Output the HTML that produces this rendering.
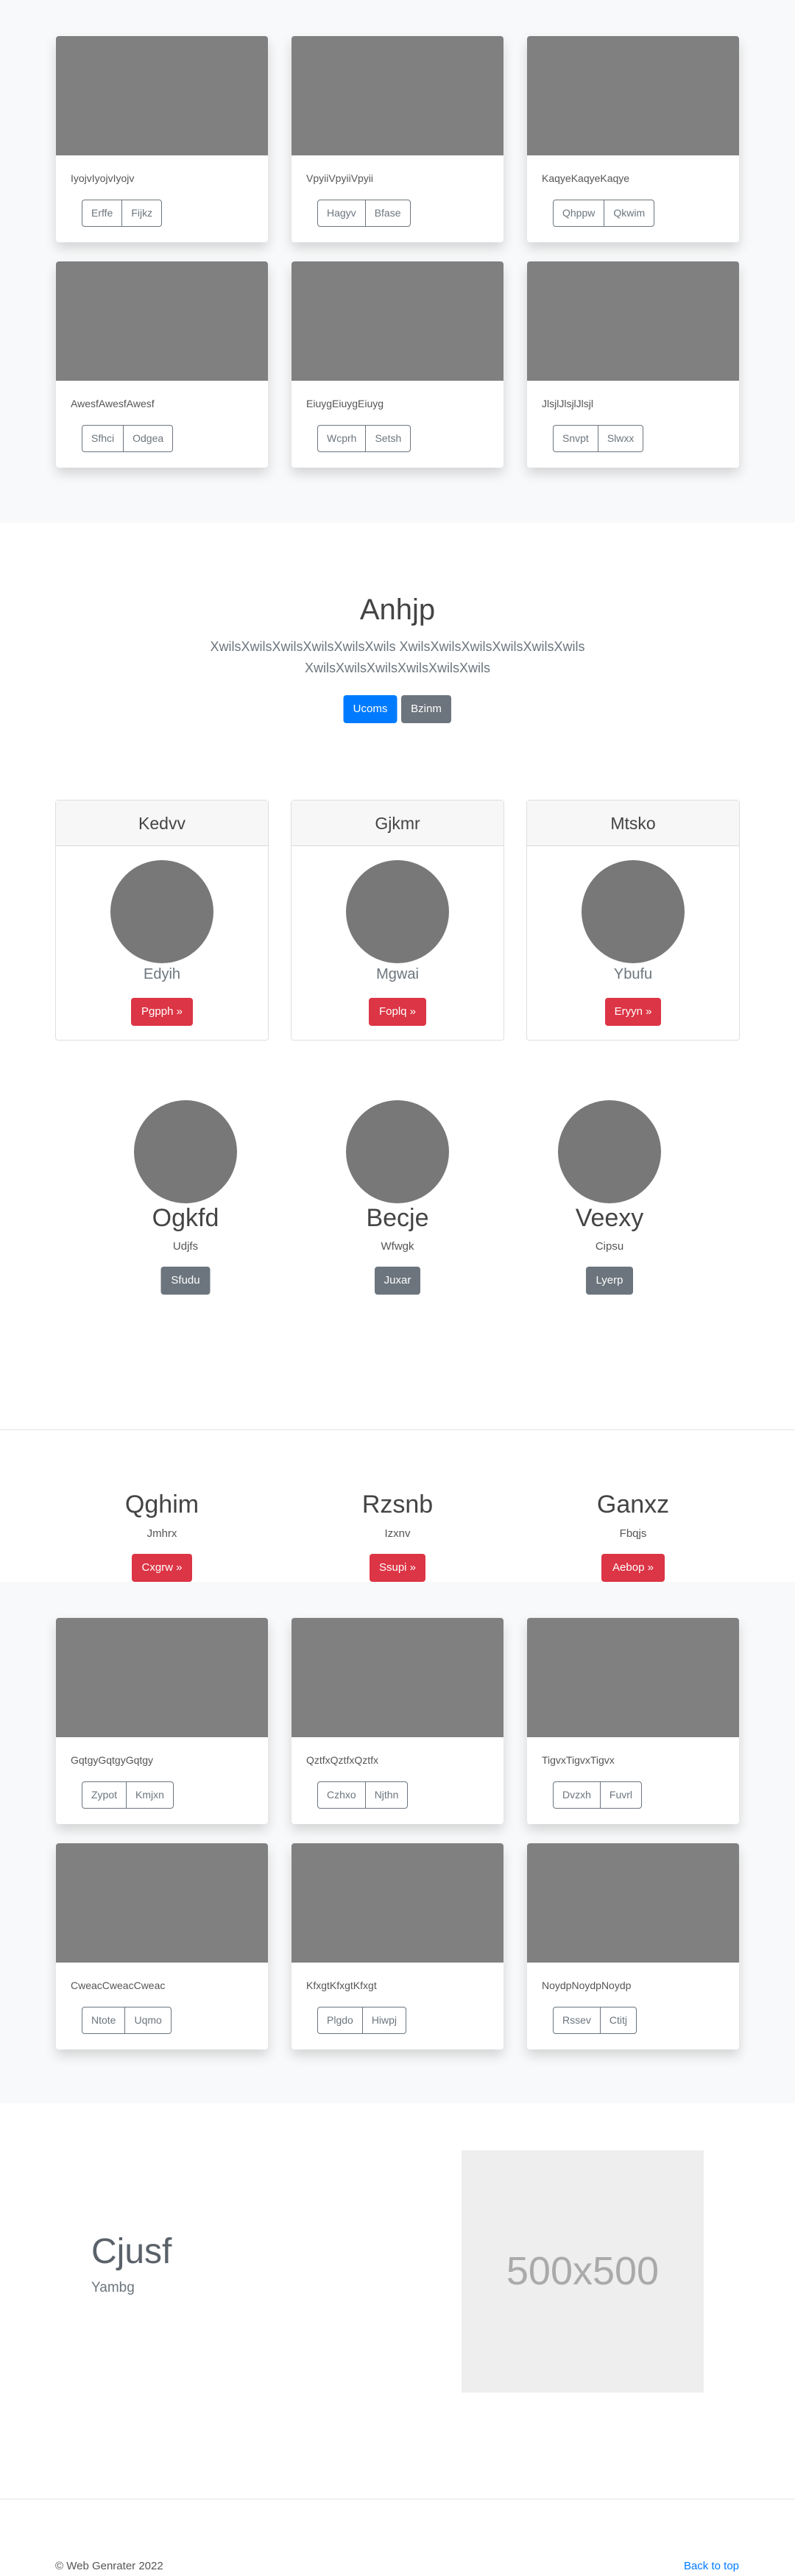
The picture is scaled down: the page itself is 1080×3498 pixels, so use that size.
<!DOCTYPE html>
<html><head><meta charset="utf-8"><style>
*{box-sizing:border-box;margin:0;padding:0}
body{width:1080px;height:3498px;position:relative;background:#fff;font-family:"Liberation Sans",sans-serif;color:#212529;overflow:hidden}
.abs{position:absolute}
.gray{background:#f8f9fa;left:0;width:1080px}
.card{position:absolute;width:288px;height:280px;background:#fff;border-radius:4px;box-shadow:0 .5rem 1rem rgba(0,0,0,.15);overflow:hidden}
.card .img{height:162px;background:#808080}
.card .t{position:absolute;left:20px;top:185px;font-size:14px;color:#555}
.card .bg{position:absolute;left:35px;top:222px;display:flex;height:37px;border:1px solid #6c757d;border-radius:4px}
.card .bg span{padding:0 12px;line-height:35px;font-size:14px;color:#6c757d}
.card .bg span+span{border-left:1px solid #6c757d}
.btn{position:absolute;height:38px;line-height:38px;color:#fff;font-size:15px;border-radius:4px;text-align:center;padding:0 12px;transform:translateX(-50%)}
.red{background:#dc3545}.sec{background:#6c757d}.blue{background:#007bff}
.c{position:absolute;transform:translateX(-50%);text-align:center;white-space:nowrap}
.pc{position:absolute;width:290px;height:327px;border:1px solid rgba(0,0,0,.125);border-radius:4px;top:1086px}
.pc .h{height:62px;background:#f7f7f7;border-bottom:1px solid rgba(0,0,0,.125);text-align:center;line-height:62px;font-size:23px;color:#444}
.circ{position:absolute;width:140px;height:140px;border-radius:50%;background:#787878;transform:translateX(-50%)}
</style></head><body>

<div class="abs gray" style="top:0;height:710px"></div>
<div class="card" style="left:76px;top:49px"><div class="img"></div><div class="t">IyojvIyojvIyojv</div><div class="bg"><span>Erffe</span><span>Fijkz</span></div></div>
<div class="card" style="left:396px;top:49px"><div class="img"></div><div class="t">VpyiiVpyiiVpyii</div><div class="bg"><span>Hagyv</span><span>Bfase</span></div></div>
<div class="card" style="left:716px;top:49px"><div class="img"></div><div class="t">KaqyeKaqyeKaqye</div><div class="bg"><span>Qhppw</span><span>Qkwim</span></div></div>
<div class="card" style="left:76px;top:355px"><div class="img"></div><div class="t">AwesfAwesfAwesf</div><div class="bg"><span>Sfhci</span><span>Odgea</span></div></div>
<div class="card" style="left:396px;top:355px"><div class="img"></div><div class="t">EiuygEiuygEiuyg</div><div class="bg"><span>Wcprh</span><span>Setsh</span></div></div>
<div class="card" style="left:716px;top:355px"><div class="img"></div><div class="t">JlsjlJlsjlJlsjl</div><div class="bg"><span>Snvpt</span><span>Slwxx</span></div></div>

<div class="c" style="left:540px;top:806px;font-size:40px;font-weight:300;color:#444">Anhjp</div>
<div class="c" style="left:540px;top:864px;font-size:18px;line-height:29px;color:#6c757d">XwilsXwilsXwilsXwilsXwilsXwils XwilsXwilsXwilsXwilsXwilsXwils<br>XwilsXwilsXwilsXwilsXwilsXwils</div>
<div class="btn blue" style="left:503px;top:944px;width:73px">Ucoms</div>
<div class="btn sec" style="left:579px;top:944px;width:68px">Bzinm</div>

<div class="pc" style="left:75px"><div class="h">Kedvv</div></div>
<div class="pc" style="left:395px"><div class="h">Gjkmr</div></div>
<div class="pc" style="left:715px"><div class="h">Mtsko</div></div>
<div class="circ" style="left:220px;top:1168px"></div>
<div class="circ" style="left:540px;top:1168px"></div>
<div class="circ" style="left:860px;top:1168px"></div>
<div class="c" style="left:220px;top:1312px;font-size:20px;color:#6c757d">Edyih</div>
<div class="c" style="left:540px;top:1312px;font-size:20px;color:#6c757d">Mgwai</div>
<div class="c" style="left:860px;top:1312px;font-size:20px;color:#6c757d">Ybufu</div>
<div class="btn red" style="left:220px;top:1355px;width:84px">Pgpph »</div>
<div class="btn red" style="left:540px;top:1355px;width:78px">Foplq »</div>
<div class="btn red" style="left:860px;top:1355px;width:76px">Eryyn »</div>

<div class="circ" style="left:252px;top:1494px"></div>
<div class="circ" style="left:540px;top:1494px"></div>
<div class="circ" style="left:828px;top:1494px"></div>
<div class="c" style="left:252px;top:1635px;font-size:34px;color:#444">Ogkfd</div>
<div class="c" style="left:540px;top:1635px;font-size:34px;color:#444">Becje</div>
<div class="c" style="left:828px;top:1635px;font-size:34px;color:#444">Veexy</div>
<div class="c" style="left:252px;top:1684px;font-size:15px;color:#555">Udjfs</div>
<div class="c" style="left:540px;top:1684px;font-size:15px;color:#555">Wfwgk</div>
<div class="c" style="left:828px;top:1684px;font-size:15px;color:#555">Cipsu</div>
<div class="btn sec" style="left:252px;top:1720px;width:67px">Sfudu</div>
<div class="btn sec" style="left:540px;top:1720px;width:62px">Juxar</div>
<div class="btn sec" style="left:828px;top:1720px;width:64px">Lyerp</div>

<div class="abs" style="left:0;top:1941px;width:1080px;height:1px;background:#e5e5e5"></div>
<div class="c" style="left:220px;top:2024px;font-size:34px;color:#444">Qghim</div>
<div class="c" style="left:540px;top:2024px;font-size:34px;color:#444">Rzsnb</div>
<div class="c" style="left:860px;top:2024px;font-size:34px;color:#444">Ganxz</div>
<div class="c" style="left:220px;top:2074px;font-size:15px;color:#555">Jmhrx</div>
<div class="c" style="left:540px;top:2074px;font-size:15px;color:#555">Izxnv</div>
<div class="c" style="left:860px;top:2074px;font-size:15px;color:#555">Fbqjs</div>
<div class="btn red" style="left:220px;top:2110px;width:82px">Cxgrw »</div>
<div class="btn red" style="left:540px;top:2110px;width:76px">Ssupi »</div>
<div class="btn red" style="left:860px;top:2110px;width:86px">Aebop »</div>

<div class="abs gray" style="top:2148px;height:708px"></div>
<div class="card" style="left:76px;top:2197px"><div class="img"></div><div class="t">GqtgyGqtgyGqtgy</div><div class="bg"><span>Zypot</span><span>Kmjxn</span></div></div>
<div class="card" style="left:396px;top:2197px"><div class="img"></div><div class="t">QztfxQztfxQztfx</div><div class="bg"><span>Czhxo</span><span>Njthn</span></div></div>
<div class="card" style="left:716px;top:2197px"><div class="img"></div><div class="t">TigvxTigvxTigvx</div><div class="bg"><span>Dvzxh</span><span>Fuvrl</span></div></div>
<div class="card" style="left:76px;top:2503px"><div class="img"></div><div class="t">CweacCweacCweac</div><div class="bg"><span>Ntote</span><span>Uqmo</span></div></div>
<div class="card" style="left:396px;top:2503px"><div class="img"></div><div class="t">KfxgtKfxgtKfxgt</div><div class="bg"><span>Plgdo</span><span>Hiwpj</span></div></div>
<div class="card" style="left:716px;top:2503px"><div class="img"></div><div class="t">NoydpNoydpNoydp</div><div class="bg"><span>Rssev</span><span>Ctitj</span></div></div>

<div class="abs" style="left:124px;top:3030px;font-size:48px;font-weight:300;color:#5a6169">Cjusf</div>
<div class="abs" style="left:124px;top:3096px;font-size:19px;color:#6c757d">Yambg</div>
<div class="abs" style="left:627px;top:2920px;width:329px;height:329px;background:#eee;color:#aaa;font-size:54px;text-align:center;line-height:329px">500x500</div>

<div class="abs" style="left:0;top:3393px;width:1080px;height:1px;background:#e5e5e5"></div>
<div class="abs" style="left:75px;top:3476px;font-size:15px;color:#555">© Web Genrater 2022</div>
<div class="abs" style="right:76px;top:3476px;font-size:15px;color:#007bff">Back to top</div>
</body></html>
